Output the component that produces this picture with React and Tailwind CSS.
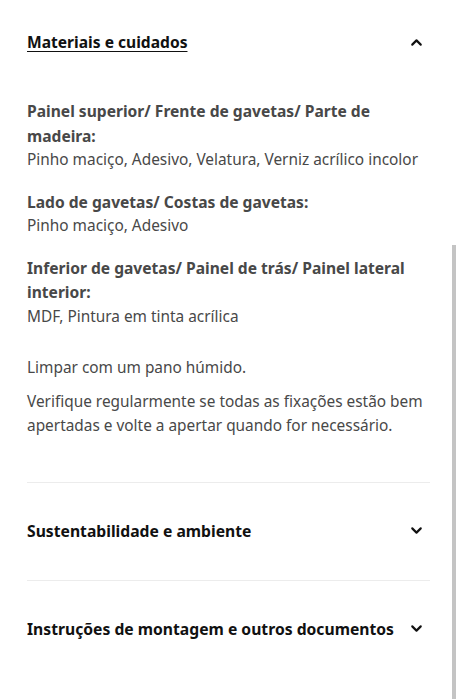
import { ChevronDown, ChevronUp } from 'lucide-react';

const materials = [
  {
    part: 'Painel superior/ Frente de gavetas/ Parte de madeira:',
    items: 'Pinho maciço, Adesivo, Velatura, Verniz acrílico incolor',
  },
  { part: 'Lado de gavetas/ Costas de gavetas:', items: 'Pinho maciço, Adesivo' },
  {
    part: 'Inferior de gavetas/ Painel de trás/ Painel lateral interior:',
    items: 'MDF, Pintura em tinta acrílica',
  },
];

function Section({ title }) {
  return (
    <div className="border-t border-[#ececec]">
      <button className="w-full flex items-center justify-between pt-[36px] pb-[37px] text-left">
        <span className="text-[15.7px] leading-[24px] font-bold text-[#111]">{title}</span>
        <ChevronDown className="w-[17px] h-[17px] mr-[5px] text-[#111]" strokeWidth={3} />
      </button>
    </div>
  );
}

export default function App() {
  return (
    <div
      className="relative min-h-[699px] bg-white pl-[27px] pr-[26px] overflow-hidden"
      style={{ fontFamily: '"Noto Sans", sans-serif' }}
    >
      {/* Materiais e cuidados */}
      <button className="w-full flex items-center justify-between pt-[30px] text-left">
        <span className="text-[15.6px] leading-[24px] font-bold text-[#111] underline underline-offset-[3px]">
          Materiais e cuidados
        </span>
        <ChevronUp className="w-[17px] h-[17px] mr-[5px] text-[#111]" strokeWidth={3} />
      </button>

      <div className="pt-[45px] pb-[43px] text-[15.4px] leading-[24.5px] text-[#484848]">
        <div className="flex flex-col gap-[17px]">
          {materials.map((m) => (
            <div key={m.part}>
              <p className="font-bold text-[15.6px]">{m.part}</p>
              <p>{m.items}</p>
            </div>
          ))}
        </div>
        <p className="mt-[27px]">Limpar com um pano húmido.</p>
        <p className="mt-[9px]">
          Verifique regularmente se todas as fixações estão bem apertadas e volte a apertar quando for necessário.
        </p>
      </div>

      <Section title="Sustentabilidade e ambiente" />
      <Section title="Instruções de montagem e outros documentos" />

      {/* scrollbar */}
      <div className="absolute right-0 top-[245px] bottom-0 w-[4px] bg-[#c4c4c4]" />
    </div>
  );
}
